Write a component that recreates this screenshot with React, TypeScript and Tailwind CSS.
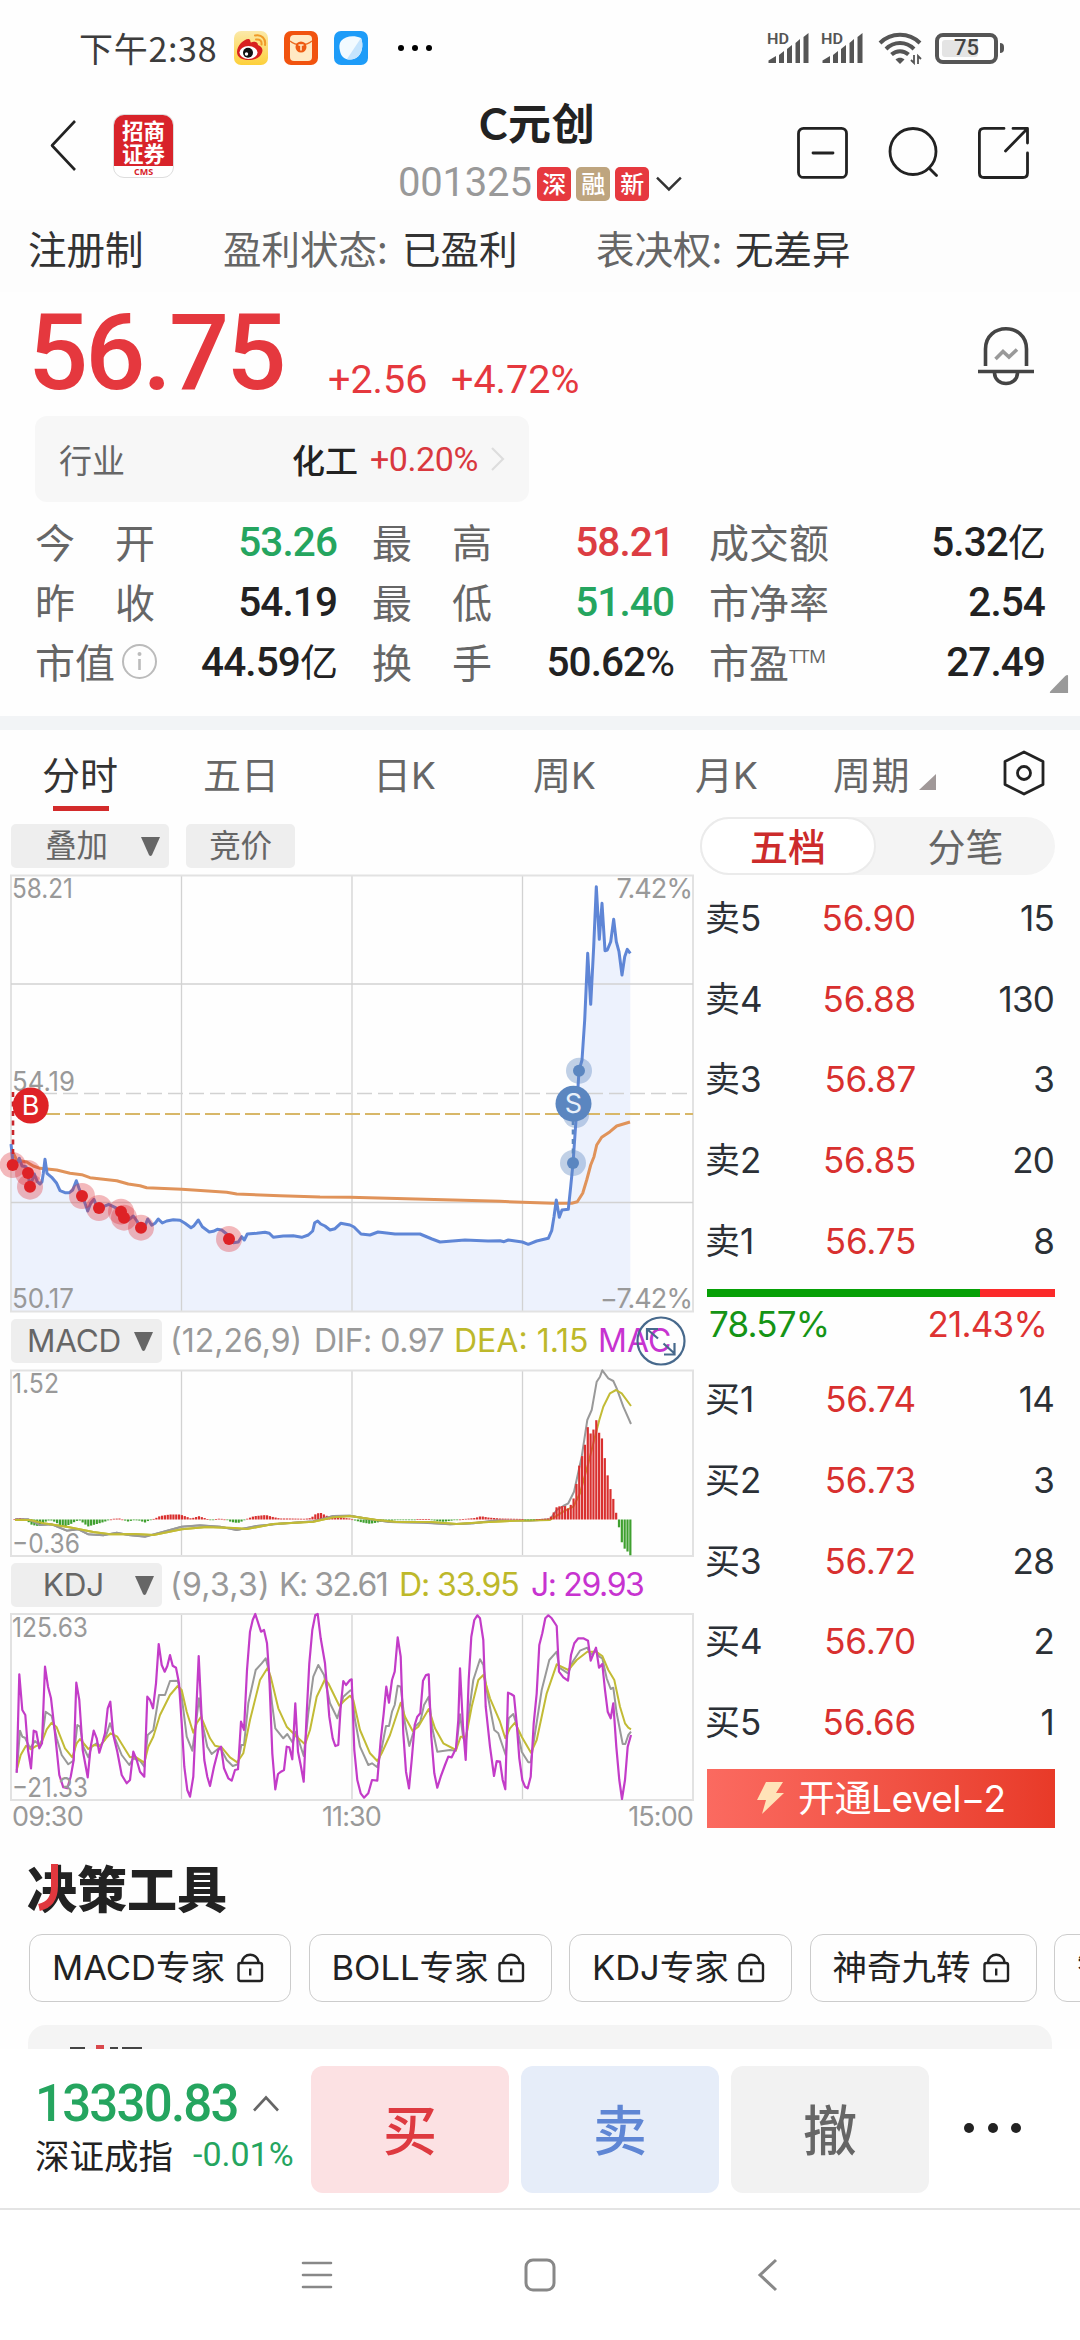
import React from 'react';

type Pt = [number, number];

const toPath = (pts: Pt[]) => 'M' + pts.map(([x, y]) => `${x.toFixed(1)} ${y.toFixed(1)}`).join('L');

/* Turns flat "x y x y" samples, three units per pixel, into chart points. */
const scaled = (raw: string, dx: number, dy: number): Pt[] => {
  const n = raw.trim().split(/[\s,]+/).map(Number);
  const out: Pt[] = [];
  for (let i = 0; i + 1 < n.length; i += 2) out.push([dx + n[i] / 3, dy + n[i + 1] / 3]);
  return out;
};

const plain = (raw: string): Pt[] => {
  const n = raw.trim().split(/[\s,]+/).map(Number);
  const out: Pt[] = [];
  for (let i = 0; i + 1 < n.length; i += 2) out.push([n[i], n[i + 1]]);
  return out;
};

const PRICE: Pt[] = [
  ...scaled(
    '33 312 38 358 44 375 50 372 58 355 66 378 78 380 84 400 90 440 97 420 103 402 112 425 120 432 126 425 130 400 135 358 141 400 155 412 170 430 180 452 195 458 208 458 218 450 229 422 237 445 246 468 255 490 263 513 272 490 282 478 290 500 297 504 310 500 326 493 345 502 362 515 371 533 385 540 400 528 412 545 422 563 434 560 443 537 455 556 465 550 475 537 487 549 500 543 520 539 540 541 555 550 573 563 582 557 595 540 607 560 628 576 640 574 652 568 665 570 680 582 687 597 700 608 715 606 725 590 733 600 742 582 770 580 795 577 808 580 820 592 850 588 880 587 905 592 925 585 938 573 944 548 953 543 962 552 975 558 990 570 1005 566 1022 550 1050 555',
    0,
    1040,
  ),
  ...plain('354 1227 361 1234 370 1235 378 1232 395 1234 420 1234 432 1239 440 1242 465 1240 488 1241'),
  ...scaled(
    '0 1142 12 1145 25 1140 67 1146 85 1153 110 1143 145 1135 155 1112 162 1070 169 1020 178 1072 186 1050 205 1048 212 980 219 910 228 780 237 632 246 600 254 480 263 280 272 433 281 260 289 80 298 238 306 130 315 272 322 270 332 245 341 178 349 245 357 275 366 345 374 290 382 268 391 280',
    500,
    860,
  ),
];

const AVERAGE: Pt[] = [
  ...scaled('40 340 50 360 80 366 100 378 120 385 170 390 210 400 245 404 270 413 350 422 385 432 420 437 440 443 545 448 680 457 710 462 840 467 960 471 1050 472', 0, 1040),
  ...scaled('0 1024 67 1027 160 1030 215 1030 232 1025 248 1000 260 960 272 915 282 890 290 855 305 832 330 815 350 798 390 786', 500, 860),
];

const BUYS = scaled('38 375 84 399 90 440 246 468 297 504 363 515 372 533 423 563 687 597', 0, 1040);

const HIST = plain(
  '14 0 17 1 20 1.3 25 .5 28 -2 31 -5 36 -6.3 41 -6.5 44 -3 48 -1 52 -1 56 -3 60 -5.5 66 -6.5 72 -4 76 -1.5 80 -1 84 -4 88 -7 95 -5 104 -2.5 109 -.5 114 .8 120 1 124 -.7 128 -2 134 -.7 139 -1 145 -3 150 -.5 155 1 160 3.5 170 5 180 5 186 3 191 1 199 3.3 206 1 211 -.8 220 1 227 -.5 231 -2.5 238 -3.5 243 -1.5 247 .7 254 3.3 266 4.5 273 2.5 280 1 290 1 305 .7 311 1.5 315 5 320 7 326 4 331 2 340 2 350 1 355 -1 362 -3 370 -4.3 380 -2.5 395 -.7 410 -.7 420 .5 430 .5 436 -1.5 444 -2.3 455 -.6 465 .6 475 1.5 481 3.3 488 2 500 1 520 .6 530 -.6 540 .5 548 1 551 3 554 7.5 557 13 565 13.5 568 11 571 15 574 22 576.5 36 579 53 582 63 585 75 587.8 92.5 590.6 86 593.5 90 596.5 100 599 87 602 81 605 60 608 42 611 28 613.5 20 616 7.5 618.5 -5 621.5 -22 624.5 -29 627.5 -32 630.5 -36',
);

const barHeight = (x: number) => {
  for (let i = 1; i < HIST.length; i++) {
    if (x <= HIST[i][0]) {
      const [x0, y0] = HIST[i - 1];
      const [x1, y1] = HIST[i];
      return y0 + ((y1 - y0) * (x - x0)) / (x1 - x0);
    }
  }
  return HIST[HIST.length - 1][1];
};

const BARS = Array.from({ length: 218 }, (_, i) => {
  const x = 14.5 + i * 2.838;
  return { x, h: barHeight(x) };
});

const DIF: Pt[] = [
  ...scaled('45 628 85 628 120 645 155 643 200 662 235 658 265 673 310 676 350 668 385 675 435 680 480 668 545 650 600 646 660 650 710 660 770 648 840 641 940 634 1000 618 1050 617', 0, 1310),
  ...scaled('60 628 120 636 220 638 300 643 370 640 440 631 540 632 600 628 620 600 640 588 655 580 672 545 695 440 712 330 725 300 740 215 750 200 757 181 775 205 790 213 800 235 820 290 843 342', 350, 1310),
];
const DEA: Pt[] = [
  ...scaled('45 630 90 630 130 640 200 650 280 666 330 673 400 672 460 675 545 658 620 651 700 654 740 657 820 642 940 635 1000 622 1050 618', 0, 1310),
  ...scaled('80 630 140 636 240 636 320 642 400 637 480 633 600 630 640 605 670 590 690 550 715 460 735 380 748 330 760 290 780 250 798 240 815 250 843 288', 350, 1310),
];

const J: Pt[] = [
  ...scaled(
    '50 1388 58 1093 67 1200 76 1215 84 1320 93 1375 101 1262 109 1265 118 1315 126 1300 135 1070 144 1130 153 1165 165 1270 178 1395 190 1432 202 1435 212 1400 221 1350 229 1118 238 1170 248 1320 263 1402 272 1310 281 1262 290 1285 298 1328 308 1295 315 1270 323 1195 331 1175 340 1275 352 1325 365 1395 380 1420 390 1410 400 1325 410 1350 420 1385 433 1400 442 1160 450 1170 459 1195 468 1120 476 1002 485 1065 494 1085 502 1068 510 1035 518 1067 528 1073 537 1120 545 1240 553 1370 562 1440 570 1460 580 1400 588 1220 596 1038 605 1225 613 1350 622 1400 630 1428 642 1370 655 1320 663 1310 672 1375 685 1405 695 1412 705 1380 714 1378 723 1235 732 1260 741 1080 750 965 758 930 766 912 775 940 783 965 792 960 801 1000 808 1100 817 1330 826 1438 834 1392 843 1385 852 1380 860 1310 868 1312 877 1348 886 1180 894 1325 903 1370 911 1415 920 1210 928 1060 937 960 946 915 953 912 962 985 975 1060 988 1220 998 1285 1006 1308 1015 1305 1022 1190 1030 1113 1038 1125 1050 1110',
    0,
    1310,
  ),
  ...scaled(
    '5 1108 13 1320 22 1410 32 1450 42 1463 55 1450 66 1410 82 1412 92 1290 101 1210 109 1130 117 1178 126 1110 134 1085 143 982 152 1040 160 1270 168 1385 177 1435 185 1350 194 1245 202 1220 211 1210 219 1112 228 1095 236 1093 244 1280 253 1390 262 1433 272 1400 285 1365 295 1340 305 1342 318 1315 325 1230 330 1075 339 1250 347 1350 356 1110 364 980 373 930 382 916 390 925 400 990 407 1190 420 1310 432 1398 440 1353 450 1355 458 1410 466 1438 474 1148 483 1152 492 1158 500 1240 508 1345 517 1410 525 1430 533 1435 542 1400 551 1240 560 1150 568 1005 577 970 586 925 595 916 605 925 620 948 627 1085 640 1102 654 1112 663 1035 673 1000 685 985 700 985 714 992 722 1052 738 1013 747 1073 757 1062 765 1140 773 1205 782 1225 790 1180 799 1310 808 1410 816 1467 825 1410 833 1310 843 1275',
    350,
    1310,
  ),
];
const K: Pt[] = [
  ...scaled(
    '50 1388 60 1262 67 1280 75 1283 90 1315 105 1293 118 1305 126 1290 137 1205 155 1218 170 1285 185 1335 205 1363 220 1352 232 1245 240 1250 250 1310 265 1342 275 1310 290 1300 300 1308 315 1288 330 1240 345 1285 365 1335 388 1365 400 1345 420 1352 433 1370 443 1275 460 1260 477 1155 495 1155 510 1113 533 1112 545 1160 560 1280 577 1322 588 1240 597 1165 607 1240 622 1310 635 1332 660 1312 680 1350 698 1368 714 1363 724 1305 732 1305 745 1180 767 1080 785 1060 797 1045 806 1080 816 1180 826 1255 850 1285 862 1272 878 1298 888 1265 911 1338 925 1210 940 1100 955 1065 972 1095 990 1180 1012 1225 1030 1160 1050 1142',
    0,
    1310,
  ),
  ...scaled(
    '5 1140 15 1230 30 1310 55 1365 66 1360 82 1372 95 1315 108 1248 117 1248 126 1205 134 1185 143 1127 152 1130 165 1240 178 1308 195 1250 211 1235 222 1185 236 1160 248 1260 262 1325 300 1320 318 1322 330 1213 340 1285 348 1292 358 1200 370 1110 390 1048 400 1065 410 1140 433 1260 445 1270 467 1335 476 1225 490 1212 500 1245 515 1325 535 1357 542 1357 555 1270 575 1140 598 1050 620 1025 628 1073 654 1090 668 1055 690 1022 712 1013 722 1035 738 1020 748 1040 757 1045 770 1105 782 1137 790 1133 800 1210 818 1302 826 1302 835 1275 843 1265',
    350,
    1310,
  ),
];
const D: Pt[] = [
  ...scaled(
    '50 1380 62 1335 78 1307 92 1318 110 1307 122 1305 140 1258 155 1238 170 1252 195 1315 217 1342 230 1300 240 1287 265 1317 282 1305 300 1308 318 1285 332 1270 352 1280 390 1342 405 1340 433 1358 445 1310 460 1280 480 1215 510 1155 533 1128 545 1140 560 1205 580 1268 590 1240 603 1220 630 1285 645 1307 665 1312 690 1342 712 1357 730 1330 750 1230 780 1110 803 1073 812 1100 835 1195 860 1250 890 1280 915 1303 930 1260 950 1160 975 1108 985 1120 1018 1187 1035 1170 1050 1157',
    0,
    1310,
  ),
  ...scaled(
    '10 1170 30 1260 60 1330 82 1353 95 1330 120 1275 152 1178 165 1220 188 1263 205 1250 236 1197 255 1255 280 1300 318 1320 332 1280 348 1280 365 1190 385 1110 400 1095 420 1165 450 1235 466 1285 480 1255 495 1238 515 1280 543 1328 560 1290 590 1150 620 1063 655 1080 680 1050 712 1025 738 1025 757 1038 775 1080 793 1110 810 1190 825 1240 835 1253 843 1258',
    350,
    1310,
  ),
];

const NUM = "font-['Roboto','Noto_Sans_CJK_SC',sans-serif]";

function Signal() {
  return (
    <svg width="43" height="34" viewBox="0 0 43 34">
      <text x="0" y="13" fontSize="15" fontWeight="600" fill="#555" fontFamily="Roboto, sans-serif" textLength="22" lengthAdjust="spacingAndGlyphs">HD</text>
      <g fill="#555">
        <path d="M1.5 32V29.5L9 25V32Z" />
        <path d="M12 32V24L17 20V32Z" />
        <path d="M20 32V18L25 14V32Z" />
        <path d="M28.5 32V12L33 8V32Z" />
        <path d="M36.5 32V6L41.5 2V32Z" />
      </g>
    </svg>
  );
}

function StatusBar() {
  return (
    <div className="flex h-[96px] items-center pl-[79px] pr-[76px]">
      <span className="w-[155px] whitespace-nowrap text-[34px] leading-none tracking-[0.7px] text-[#3c3c3c]">下午2:38</span>
      <svg width="34" height="34" viewBox="0 0 34 34">
        <defs>
          <linearGradient id="wb" x1="0" y1="0" x2="0" y2="1">
            <stop offset="0" stopColor="#fbe9a9" />
            <stop offset="1" stopColor="#fdd03a" />
          </linearGradient>
        </defs>
        <rect width="34" height="34" rx="7" fill="url(#wb)" />
        <path d="M3 21C3 14 11 7 15 8C17 9 16 11 17 11.500C20 10 24 11 24 14C29 16 30 20 26 25C21 31 3 31 3 21Z" fill="#d8201f" />
        <ellipse cx="14.500" cy="21.500" rx="9" ry="6.500" fill="#fff" />
        <circle cx="14" cy="21.700" r="5" fill="#111" />
        <circle cx="12.500" cy="23" r="1.700" fill="#fff" />
        <path d="M21 4.500C28 3 32 8 31 14M22 8.500C26 8 28 10 27.500 13.500" fill="none" stroke="#f09a28" strokeWidth="2" strokeLinecap="round" />
      </svg>
      <svg className="ml-4" width="34" height="34" viewBox="0 0 34 34">
        <rect width="34" height="34" rx="7" fill="#f1530f" />
        <rect x="6" y="4" width="22" height="26" rx="4" fill="#ffe9c4" />
        <path d="M6 10C12 15 22 15 28 10" fill="none" stroke="#ea6a20" strokeWidth="1.300" />
        <circle cx="17" cy="16" r="5.500" fill="#ee5a12" />
        <path d="M14.500 14H19.500M17 14V19.500" stroke="#ffe9c4" strokeWidth="1.600" />
      </svg>
      <svg className="ml-4" width="34" height="34" viewBox="0 0 34 34">
        <rect width="34" height="34" rx="7" fill="#1e9cf8" />
        <path d="M7 10C11 5 20 4 27 7C30 14 28 24 22 27C14 31 7 27 6 20C5 16 5 13 7 10Z" fill="#f2faff" />
        <path d="M27 7C30 14 28 24 22 27C19 28.500 16 29 13 28Z" fill="#c5e4fd" />
      </svg>
      <svg className="ml-[30px]" width="36" height="8" viewBox="0 0 36 8">
        <circle cx="3" cy="4" r="3" /><circle cx="17" cy="4" r="3" /><circle cx="31" cy="4" r="3" />
      </svg>
      <div className="ml-auto flex items-center">
        <Signal />
        <div className="w-[11px]" />
        <Signal />
        <svg className="ml-[14px]" width="44" height="34" viewBox="0 0 44 34">
          <g fill="none" stroke="#555" strokeWidth="4">
            <path d="M2 12C13 1 31 1 42 12" />
            <path d="M8 18C16 10 28 10 36 18" />
            <path d="M13.500 23.500C18.500 19 25.500 19 30.500 23.500" />
          </g>
          <path d="M17.500 28.500C20 26 24 26 26.500 28.500L22 33Z" fill="#555" />
          <path d="M36 24V32L33 29M40 33V25L43 28" fill="none" stroke="#555" strokeWidth="1.800" />
        </svg>
        <div className="ml-[13px] flex h-[31px] w-[63px] items-center rounded-[8px] border-4 border-[#555] p-[3px]">
          <div className="flex h-full w-[36px] items-center rounded-[3px] bg-[#e4e4e4] pl-[12px]">
            <span className={`${NUM} text-[22px] font-medium leading-none text-[#444]`}>75</span>
          </div>
        </div>
        <div className="ml-[2px] h-[10px] w-[4px] rounded-r bg-[#555]" />
      </div>
    </div>
  );
}

function Tag({ children, gold }: { children: string; gold?: boolean }) {
  return (
    <span className={`flex h-[34px] w-[34px] items-center justify-center rounded-[5px] pb-[2px] text-[24px] font-medium leading-none text-white ${gold ? 'bg-[#bea57f]' : 'bg-[#e6393f]'}`}>
      {children}
    </span>
  );
}

function Header() {
  return (
    <div className="flex h-[114px]">
      <svg className="ml-[49px] mt-[23px]" width="28" height="54" viewBox="0 0 28 54">
        <path d="M26 2L3 26.500L26 51" fill="none" stroke="#222" strokeWidth="2.600" strokeLinejoin="round" />
      </svg>
      <div className="ml-[36px] mt-[18px] flex h-[64px] w-[61px] flex-col items-center overflow-hidden rounded-[11px] border border-[#ddd] bg-white">
        <div className="flex h-[51px] w-full flex-col items-center justify-center bg-[#d8232a] text-[21.5px] font-bold leading-[23px] text-white">
          <span>招商</span>
          <span>证券</span>
        </div>
        <span className="font-['Open_Sans',sans-serif] text-[9px] font-bold leading-[11px] text-[#d8232a]">CMS</span>
      </div>
      <div className="ml-[224px] flex w-[284px] flex-col">
        <div className="mt-[4px] pl-[81px] text-[43px] font-bold leading-[42px] tracking-[0.6px] text-[#222]">
          <span className="font-['Lato','Noto_Sans_CJK_SC',sans-serif]">C元创</span>
        </div>
        <div className="mt-[22px] flex h-[34px] items-center">
          <span className={`${NUM} w-[140px] pb-[2px] text-[40px] leading-none tracking-[-0.2px] text-[#999]`}>001325</span>
          <div className="flex gap-[5px]">
            <Tag>深</Tag>
            <Tag gold>融</Tag>
            <Tag>新</Tag>
          </div>
          <svg className="ml-[7px]" width="26" height="16" viewBox="0 0 26 16">
            <path d="M1 1.500L13 13.500L25 1.500" fill="none" stroke="#333" strokeWidth="2.400" />
          </svg>
        </div>
      </div>
      <div className="ml-[115px] mt-[30px] flex gap-[38px]">
        <svg width="52" height="54" viewBox="0 0 52 54" fill="none" stroke="#222" strokeWidth="2.800" strokeLinecap="round">
          <rect x="1.500" y="2.400" width="48" height="49" rx="5" />
          <path d="M16 27H36" />
        </svg>
        <svg width="52" height="54" viewBox="0 0 52 54" fill="none" stroke="#222" strokeWidth="2.800" strokeLinecap="round">
          <circle cx="26" cy="25.500" r="23" />
          <path d="M42 42L49.500 49.500" />
        </svg>
        <svg width="54" height="54" viewBox="0 0 54 54" fill="none" stroke="#222" strokeWidth="2.800" strokeLinecap="round" strokeLinejoin="round">
          <path d="M27 2.400H7Q2.400 2.400 2.400 7V47Q2.400 51.500 7 51.500H46Q50.500 51.500 50.500 47V27" />
          <path d="M36 2.400H50.500V17M50 3L28.500 25" />
        </svg>
      </div>
    </div>
  );
}

function Facts() {
  return (
    <div className="flex h-[82px] items-center bg-[#fdfdfd] pb-[8px] pl-[28px] text-[38.5px] leading-none text-[#333]">
      <span className="w-[195px]">注册制</span>
      <span className="flex w-[373px] gap-[16px] whitespace-nowrap"><span className="w-[163px] text-[#666]">盈利状态:</span><span>已盈利</span></span>
      <span className="flex gap-[16px] whitespace-nowrap"><span className="w-[123px] text-[#666]">表决权:</span><span>无差异</span></span>
    </div>
  );
}

function Price() {
  return (
    <div className="flex h-[124px]">
      <div className={`${NUM} flex items-start pl-[28px] text-[#e5383e]`}>
        <span className="w-[300px] text-[106px] font-medium leading-[122px] tracking-[-3px]">56.75</span>
        <span className="mt-[68px] w-[123px] text-[39.5px] leading-[40px]">+2.56</span>
        <span className="mt-[68px] text-[39.5px] leading-[40px]">+4.72%</span>
      </div>
      <svg className="ml-auto mr-[44px] mt-[34px]" width="60" height="62" viewBox="0 0 60 62" fill="none" stroke="#444" strokeWidth="3.600">
        <path d="M9.500 40V23C9.500 -4 50.500 -4 50.500 23V40" />
        <path d="M2 45.500H58" />
        <path d="M18.500 47C19 61 41 61 41.500 47" />
        <path d="M19.500 33L27 25.500L33 31L41 23.500" stroke="#999" />
      </svg>
    </div>
  );
}

function Industry() {
  return (
    <div className="ml-[35px] flex h-[86px] w-[494px] items-center rounded-[12px] bg-[#f7f7f7] pl-[24px] pr-[23px]">
      <span className="text-[33px] leading-none text-[#666]">行业</span>
      <span className="ml-auto text-[33px] font-medium leading-none text-[#222]">化工</span>
      <span className={`${NUM} ml-[12px] text-[34px] leading-none tracking-[-0.4px] text-[#d9383e]`}>+0.20%</span>
      <svg className="ml-[12px]" width="16" height="24" viewBox="0 0 16 24">
        <path d="M2 1L13 12L2 23" fill="none" stroke="#ddd" strokeWidth="2.200" />
      </svg>
    </div>
  );
}

function Stat({ label, value, tone = 'text-[#222]' }: { label: React.ReactNode; value: React.ReactNode; tone?: string }) {
  return (
    <div className="flex h-[60px] items-center justify-between">
      <span className="flex items-center whitespace-pre pb-[2px] text-[40px] leading-none text-[#666]">{label}</span>
      <span className={`${NUM} text-[40.5px] font-medium leading-none tracking-[-0.9px] ${tone}`}>{value}</span>
    </div>
  );
}

const Split = ({ a, b }: { a: string; b: string }) => (
  <span className="flex w-[120px] justify-between"><span>{a}</span><span>{b}</span></span>
);
const Yi = () => <span className="font-['Noto_Sans_CJK_SC',sans-serif] text-[38px] font-normal">亿</span>;

function Stats() {
  return (
    <div className="flex h-[214px] pl-[35px] pt-[10px]">
      <div className="w-[302px]">
        <Stat label={<Split a="今" b="开" />} value="53.26" tone="text-[#25a55f]" />
        <Stat label={<Split a="昨" b="收" />} value="54.19" />
        <Stat
          label={
            <>
              市值
              <svg className="ml-[6px]" width="37" height="37" viewBox="0 0 37 37">
                <circle cx="18.500" cy="18.500" r="16.500" fill="none" stroke="#bbb" strokeWidth="2" />
                <circle cx="18.500" cy="11" r="2" fill="#bbb" />
                <path d="M18.500 16V27" stroke="#bbb" strokeWidth="2.600" />
              </svg>
            </>
          }
          value={<>44.59<Yi /></>}
        />
      </div>
      <div className="ml-[35px] w-[302px]">
        <Stat label={<Split a="最" b="高" />} value="58.21" tone="text-[#dc3d43]" />
        <Stat label={<Split a="最" b="低" />} value="51.40" tone="text-[#25a55f]" />
        <Stat label={<Split a="换" b="手" />} value={<>50.62<span className="font-normal">%</span></>} />
      </div>
      <div className="ml-[35px] w-[336px]">
        <Stat label="成交额" value={<>5.32<Yi /></>} />
        <Stat label="市净率" value="2.54" />
        <Stat
          label={<>市盈<span className="font-['Open_Sans',sans-serif] mb-[10px] text-[19px] font-normal tracking-[-0.5px]">TTM</span></>}
          value="27.49"
        />
      </div>
      <svg className="ml-[4px] mt-[162px]" width="20" height="20" viewBox="0 0 21 21">
        <path d="M2 20Q0 20 1.500 18L17 2Q20 0 20 2V20Z" fill="#999" />
      </svg>
    </div>
  );
}

function Tabs() {
  return (
    <div className="flex h-[87px] items-start pl-[42px] pt-[23px] text-[38px] font-normal leading-[40px] text-[#666]">
      <div className="flex w-[161px] flex-col">
        <span className="text-[#333]">分时</span>
        <span className="ml-[11px] mt-[13px] h-[5px] w-[56px] bg-[#d32b2b]" />
      </div>
      <span className="w-[170px]">五日</span>
      <span className="w-[160px]">日<span className="font-['Inter',sans-serif] text-[37px]">K</span></span>
      <span className="w-[162px]">周<span className="font-['Inter',sans-serif] text-[37px]">K</span></span>
      <span className="w-[138px]">月<span className="font-['Inter',sans-serif] text-[37px]">K</span></span>
      <span className="w-[77px] tracking-[0.5px]">周期</span>
      <svg className="ml-[9px] mt-[21px]" width="17" height="17" viewBox="0 0 17 17"><path d="M0 16L17 0V16Z" fill="#a09898" /></svg>
      <svg className="ml-[66px] mt-[-3px]" width="44" height="46" viewBox="0 0 44 46" fill="none" stroke="#222" strokeWidth="2.800" strokeLinejoin="round">
        <path d="M22 2L41 11.500V34.500L22 44L3 34.500V11.500Z" />
        <circle cx="22" cy="23" r="6.500" />
      </svg>
    </div>
  );
}

function Pill({ children, arrow, width }: { children: string; arrow?: boolean; width: string }) {
  return (
    <div className={`flex h-[44px] ${width} items-center justify-center rounded-[5px] bg-[#eee]`}>
      <span className="font-['Inter','Noto_Sans_CJK_SC',sans-serif] text-[31.5px] leading-none tracking-[-0.2px] text-[#666]">{children}</span>
      {arrow && <svg className={children === 'MACD' ? 'ml-[13px]' : children === 'KDJ' ? 'ml-[31px]' : 'ml-[33px]'} width="19" height="19" viewBox="0 0 19 19"><path d="M0 0H19L11 18Q9.500 20 8 18Z" fill="#666" /></svg>}
    </div>
  );
}

function Frame({ top, bottom }: { top: number; bottom: number }) {
  return (
    <g fill="none">
      {[181.5, 352, 522.5].map((x) => <path key={x} d={`M${x} ${top}V${bottom}`} stroke="#d2d2d2" strokeWidth="1.300" />)}
      <rect x="11" y={top} width="682" height={bottom - top} stroke="#e2e2e2" strokeWidth="2" />
    </g>
  );
}

function PriceChart() {
  return (
    <svg width="700" height="451" viewBox="0 868 700 451" className="block">
      <path d={toPath(PRICE) + 'L630.3 1311L11 1311Z'} fill="#edf2fd" />
      <Frame top={875.5} bottom={1311.5} />
      <g fill="none" stroke="#d2d2d2" strokeWidth="1.300">
        <path d="M11 984H693M11 1202.500H693" />
        <path d="M42 1093.500H693" strokeDasharray="15 6" />
      </g>
      <path d="M45 1114H693" stroke="#d8b768" strokeWidth="2.200" strokeDasharray="15 5" />
      <g fontFamily="Inter, sans-serif" fontSize="27" fill="#999">
        <text x="12" y="898" textLength="61" lengthAdjust="spacingAndGlyphs">58.21</text>
        <text x="12" y="1090.500" textLength="63" lengthAdjust="spacingAndGlyphs">54.19</text>
        <text x="12" y="1308" textLength="62" lengthAdjust="spacingAndGlyphs">50.17</text>
        <text x="692" y="898" textAnchor="end" letterSpacing="-.9">7.42%</text>
        <text x="692" y="1308" textAnchor="end" letterSpacing="-.9">−7.42%</text>
      </g>
      <path d={toPath(AVERAGE)} fill="none" stroke="#e0935a" strokeWidth="3" strokeLinejoin="round" />
      <path d={toPath(PRICE)} fill="none" stroke="#5f86d6" strokeWidth="3" strokeLinejoin="round" />
      <path d="M13 1092V1158" stroke="#c9252b" strokeWidth="2.600" strokeDasharray="5 4.500" />
      <g fill="#dd2a33" fillOpacity=".33">{BUYS.map(([x, y]) => <circle key={x} cx={x} cy={y} r="13" />)}</g>
      <g fill="#de2226">{BUYS.map(([x, y]) => <circle key={x} cx={x} cy={y} r="6" />)}</g>
      <circle cx="30.700" cy="1105.500" r="18" fill="#de2226" />
      <text x="30.700" y="1115" fontSize="27" textAnchor="middle" fill="#fff" fontFamily="Inter, sans-serif">B</text>
      <g fill="#5b86c0" fillOpacity=".38">
        <circle cx="579" cy="1070.700" r="13" />
        <circle cx="573" cy="1163" r="13" />
        <circle cx="576" cy="1115" r="13" />
      </g>
      <g fill="#5b86c0">
        <circle cx="579" cy="1070.700" r="6" />
        <circle cx="573" cy="1163" r="6" />
        <circle cx="573.500" cy="1103.700" r="18" />
      </g>
      <path d="M573 1120V1160" stroke="#5b86c0" strokeWidth="2.600" strokeDasharray="5 4.500" />
      <text x="573.500" y="1113" fontSize="27" textAnchor="middle" fill="#e8f0fa" fontFamily="Inter, sans-serif">S</text>
    </svg>
  );
}

function MacdChart() {
  return (
    <svg width="700" height="200" viewBox="0 1363 700 200" className="block">
      <Frame top={1370.5} bottom={1556} />
      <g fontFamily="Inter, sans-serif" fontSize="27" fill="#999">
        <text x="12" y="1392.500" textLength="47" lengthAdjust="spacingAndGlyphs">1.52</text>
        <text x="12" y="1552.500" textLength="68" lengthAdjust="spacingAndGlyphs">−0.36</text>
      </g>
      <path d={toPath(DIF)} fill="none" stroke="#999" strokeWidth="2" strokeLinejoin="round" />
      <path d={toPath(DEA)} fill="none" stroke="#c2bb35" strokeWidth="2" strokeLinejoin="round" />
      {BARS.map(({ x, h }) => (
        <rect key={x} x={x - 1.1} y={h > 0 ? 1519.5 - h : 1519.5} width="2.200" height={Math.max(Math.abs(h), 0.7)} fill={h > 0 ? '#d9302f' : '#3fa02f'} />
      ))}
      <path d={toPath(DIF.slice(0, -17))} fill="none" stroke="#999" strokeWidth="1.800" />
      <path d={toPath(DEA.slice(0, -12))} fill="none" stroke="#c2bb35" strokeWidth="2" />
    </svg>
  );
}

function KdjChart() {
  return (
    <svg width="700" height="196" viewBox="0 1607 700 196" className="block">
      <Frame top={1614} bottom={1800} />
      <g fill="none" strokeLinejoin="round" strokeWidth="2">
        <path d={toPath(K)} stroke="#999" />
        <path d={toPath(D)} stroke="#c2bb35" />
        <path d={toPath(J)} stroke="#c33cc8" strokeWidth="2.200" />
      </g>
      <g fontFamily="Inter, sans-serif" fontSize="27" fill="#999">
        <text x="12" y="1636.500" textLength="76" lengthAdjust="spacingAndGlyphs">125.63</text>
        <text x="12" y="1796.500" textLength="76" lengthAdjust="spacingAndGlyphs">−21.33</text>
      </g>
    </svg>
  );
}

const IND = "font-['Inter',sans-serif] whitespace-nowrap text-[32px] leading-none";

function Charts() {
  return (
    <div className="w-[700px] pt-[7px]">
      <div className="flex gap-[17px] pl-[11px]">
        <Pill width="w-[158px] pl-[25px]" arrow>叠加</Pill>
        <Pill width="w-[109px]">竞价</Pill>
      </div>
      <PriceChart />
      <div className="relative flex items-center pl-[11px]">
        <Pill width="w-[151px] pl-[7px]" arrow>MACD</Pill>
        <div className={`${IND} ml-[8px] flex text-[#999]`}>
          <span className="w-[144px]">(12,26,9)</span>
          <span className="w-[140px] tracking-[-0.5px]">DIF: 0.97</span>
          <span className="w-[144px] text-[#bdb82a]">DEA: 1.15</span>
          <span className="text-[#c733d0]">MAC</span>
        </div>
        <svg className="absolute left-[636px] top-[-3px]" width="50" height="50" viewBox="0 0 50 50" fill="none" stroke="#47698c" strokeWidth="2.200">
          <circle cx="25" cy="25" r="23.500" />
          <path d="M22 22.500L11.500 13.500M11 24V13H22M27.500 27.500L38.500 37.500M38.500 27V38.500H28" />
        </svg>
      </div>
      <MacdChart />
      <div className="flex items-center pl-[11px]">
        <Pill width="w-[151px] pl-[24px]" arrow>KDJ</Pill>
        <div className={`${IND} ml-[8px] flex text-[#999]`}>
          <span className="w-[109px] tracking-[0.3px]">(9,3,3)</span>
          <span className="w-[120px] tracking-[-1.5px]">K: 32.61</span>
          <span className="w-[132px] tracking-[-1.1px] text-[#bdb82a]">D: 33.95</span>
          <span className="tracking-[-1.4px] text-[#c733d0]">J: 29.93</span>
        </div>
      </div>
      <KdjChart />
      <div className="flex h-[26px] items-center pl-[12px] pr-[7px] font-['Inter',sans-serif] text-[27px] leading-none tracking-[-0.9px] text-[#999]">
        <span className="w-[310px]">09:30</span>
        <span>11:30</span>
        <span className="ml-auto">15:00</span>
      </div>
    </div>
  );
}

function Level({ side, price, size }: { side: string; price: string; size: string }) {
  return (
    <div className="flex h-[80.7px] items-center pl-[5px] pr-px font-['Inter','Noto_Sans_CJK_SC',sans-serif] text-[35px] leading-none tracking-[-0.8px] text-[#2b3036]">
      <span className="w-[60px] whitespace-nowrap text-[35px] tracking-normal">{side}</span>
      <span className="w-[151px] text-right tracking-[-0.2px] text-[#d8302f]">{price}</span>
      <span className="flex-1 text-right">{size}</span>
    </div>
  );
}

function OrderBook() {
  return (
    <div className="w-[355px]">
      <div className="flex h-[58px] rounded-full bg-[#f4f4f4] text-[38px] leading-none">
        <div className="flex w-[176px] items-center justify-center rounded-full border-2 border-[#ebebeb] bg-white pb-[2px] font-medium text-[#cc2b2b]">五档</div>
        <div className="flex flex-1 items-center justify-center pb-[2px] text-[#666]">分笔</div>
      </div>
      <div className="mt-[3px]">
        <Level side="卖5" price="56.90" size="15" />
        <Level side="卖4" price="56.88" size="130" />
        <Level side="卖3" price="56.87" size="3" />
        <Level side="卖2" price="56.85" size="20" />
        <Level side="卖1" price="56.75" size="8" />
      </div>
      <div className="ml-[7px] mt-[8px] flex h-[8px] bg-[#fb2a2a]">
        <div className="w-[273px] bg-[#06a006]" />
      </div>
      <div className="flex h-[54px] items-center justify-between pl-[9px] pr-[8px] font-['Inter',sans-serif] text-[35px] leading-none tracking-[-0.8px]">
        <span className="text-[#159415]">78.57%</span>
        <span className="text-[#de3232]">21.43%</span>
      </div>
      <div className="mt-[8px]">
        <Level side="买1" price="56.74" size="14" />
        <Level side="买2" price="56.73" size="3" />
        <Level side="买3" price="56.72" size="28" />
        <Level side="买4" price="56.70" size="2" />
        <Level side="买5" price="56.66" size="1" />
      </div>
      <div className="ml-[7px] mt-[6px] flex h-[59px] items-center bg-linear-to-r from-[#fb6a60] to-[#e83a28] pl-[50px]">
        <svg width="27" height="32" viewBox="0 0 27 32"><path d="M9 0H26L19 11H27L5 32L9 18H0Z" fill="#ffe3b8" /></svg>
        <span className="ml-[14px] font-['Inter','Noto_Sans_CJK_SC',sans-serif] text-[37px] leading-none tracking-[-0.5px] text-white">开通Level−2</span>
      </div>
    </div>
  );
}

function Lock() {
  return (
    <svg width="27" height="30" viewBox="0 0 27 30" fill="none" stroke="#222" strokeWidth="2.400">
      <rect x="1.500" y="10" width="23.500" height="18" rx="2" />
      <path d="M5 10C5 -1 21.500 -1 21.500 10M13.200 15.500V22.500" />
    </svg>
  );
}

function Chip({ label, width }: { label: string; width: string }) {
  return (
    <div className={`flex h-[68px] ${width} shrink-0 items-center rounded-[13px] border-[1.5px] border-[#ccc] pl-[22px]`}>
      <span className="font-['Inter','Noto_Sans_CJK_SC',sans-serif] whitespace-nowrap text-[34.5px] leading-none text-[#222]">{label}</span>
      <span className="ml-auto mr-[26px]"><Lock /></span>
    </div>
  );
}

function Tools() {
  return (
    <div className="h-[220px] overflow-hidden bg-[#fefefe] pt-[32px]">
      <div className="relative ml-[27px] h-[50px] text-[50px] font-black leading-[50px] text-[#222]">
        决策工具
        <svg className="absolute left-[10px] top-[3px]" width="24" height="48" viewBox="0 0 24 48">
          <path d="M17.500 0V22C17.500 34 13 41 2 43.500" fill="none" stroke="#e0383e" strokeWidth="7" />
        </svg>
      </div>
      <div className="mt-[23px] flex w-[1200px] gap-[17.5px] pl-[29px]">
        <Chip label="MACD专家" width="w-[262px]" />
        <Chip label="BOLL专家" width="w-[243px]" />
        <Chip label="KDJ专家" width="w-[223px]" />
        <Chip label="神奇九转" width="w-[227px]" />
        <Chip label="智能诊股" width="w-[227px]" />
      </div>
      <div className="ml-[28px] mt-[23px] flex h-[60px] w-[1024px] gap-[4px] rounded-[18px] bg-[#f4f4f4] pl-[42px] pt-[20px]">
        <span className="mt-[2px] h-[6px] w-[15px] bg-[#444]" />
        <span className="ml-[7px] h-[8px] w-[8px] bg-[#d9484c]" />
        <span className="ml-[2px] mt-[2px] h-[6px] w-[8px] bg-[#444]" />
        <span className="mt-[2px] h-[6px] w-[20px] bg-[#444]" />
      </div>
    </div>
  );
}

function TradeBar() {
  return (
    <div className="relative flex h-[161px] border-b-2 border-[#e4e4e4] bg-white pl-[35px] pt-[17px]">
      <div className="w-[276px]">
        <div className="flex h-[74px] items-center">
          <span className={`${NUM} w-[217px] text-[51px] font-medium leading-none tracking-[-1.8px] text-[#25a55f]`}>13330.83</span>
          <svg width="28" height="17" viewBox="0 0 28 17"><path d="M2 15.500L14 2.500L26 15.500" fill="none" stroke="#666" strokeWidth="2.600" /></svg>
        </div>
        <div className="mt-[-3px] flex items-center whitespace-nowrap text-[34.5px] leading-[32px] text-[#222]">
          <span className="w-[158px]">深证成指</span>
          <span className={`${NUM} text-[34px] leading-none text-[#25a55f]`}>-0.01%</span>
        </div>
      </div>
      <div className="flex h-[127px] gap-[12px] text-[54px] font-medium leading-none">
        <div className="flex w-[198px] items-center justify-center rounded-[12px] bg-[#fce1e3] pb-[3px] text-[#de3a40]">买</div>
        <div className="flex w-[198px] items-center justify-center rounded-[12px] bg-[#e6edf9] pb-[3px] text-[#5f86d4]">卖</div>
        <div className="flex w-[198px] items-center justify-center rounded-[12px] bg-[#f2f2f2] pb-[3px] text-[#666]">撤</div>
      </div>
      <svg className="ml-[33px] mt-[56px]" width="62" height="12" viewBox="0 0 62 12" fill="#222">
        <circle cx="7" cy="6" r="5" /><circle cx="31" cy="6" r="5" /><circle cx="54" cy="6" r="5" />
      </svg>
    </div>
  );
}

function NavBar() {
  return (
    <div className="flex h-[130px] items-center bg-white pl-[300px]">
      <svg width="34" height="32" viewBox="0 0 34 32" stroke="#888" strokeWidth="2.600" strokeLinecap="round">
        <path d="M3 4H31M3 16H31M3 28H31" />
      </svg>
      <svg className="ml-[190px]" width="32" height="34" viewBox="0 0 32 34" fill="none" stroke="#888" strokeWidth="3">
        <rect x="2" y="2" width="28" height="30" rx="7" />
      </svg>
      <svg className="ml-[201px]" width="22" height="34" viewBox="0 0 22 34" fill="none" stroke="#888" strokeWidth="3">
        <path d="M19 2L3 17L19 32" />
      </svg>
    </div>
  );
}

export default function App() {
  return (
    <div className="h-[2340px] w-[1080px] overflow-hidden bg-[#fefefe] font-['Noto_Sans_CJK_SC',sans-serif]">
      <StatusBar />
      <Header />
      <Facts />
      <Price />
      <Industry />
      <Stats />
      <div className="h-[14px] bg-[#f2f4f6]" />
      <Tabs />
      <div className="flex h-[1012px]">
        <Charts />
        <OrderBook />
      </div>
      <Tools />
      <TradeBar />
      <NavBar />
    </div>
  );
}
